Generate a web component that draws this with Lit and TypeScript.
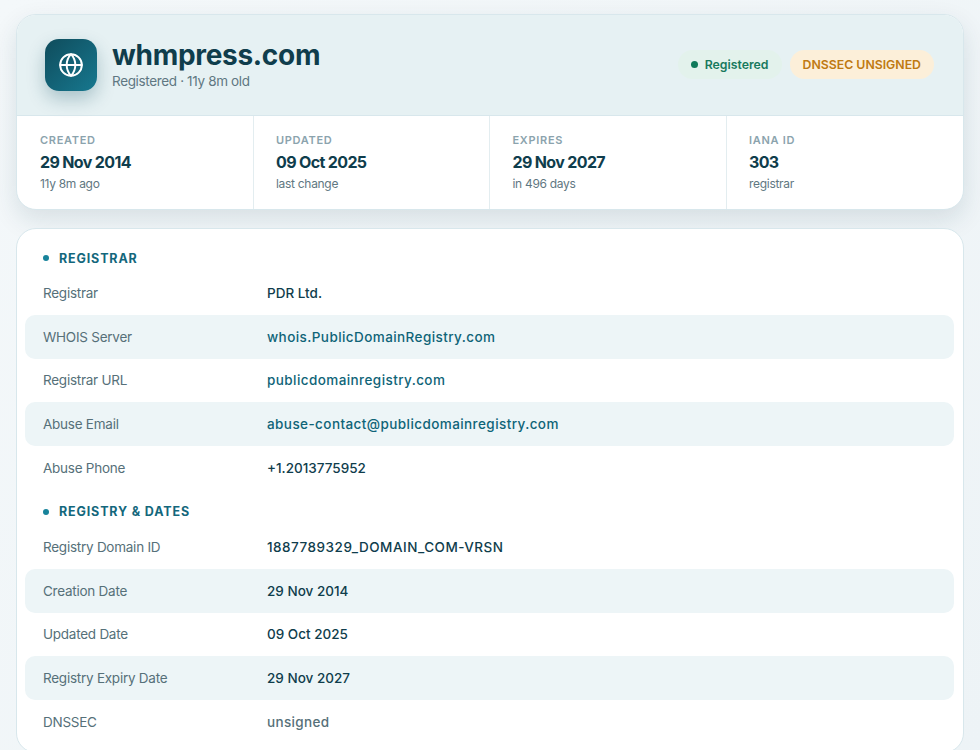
import { css, html, LitElement } from "lit";
import { customElement } from "lit/decorators.js";

type Row = { label: string; value: string; kind?: "link" | "muted" | "id" };

const stats = [
  { label: "CREATED", value: "29 Nov 2014", note: "11y 8m ago" },
  { label: "UPDATED", value: "09 Oct 2025", note: "last change" },
  { label: "EXPIRES", value: "29 Nov 2027", note: "in 496 days" },
  { label: "IANA ID", value: "303", note: "registrar" },
];

const sections: { title: string; rows: Row[] }[] = [
  {
    title: "REGISTRAR",
    rows: [
      { label: "Registrar", value: "PDR Ltd." },
      { label: "WHOIS Server", value: "whois.PublicDomainRegistry.com", kind: "link" },
      { label: "Registrar URL", value: "publicdomainregistry.com", kind: "link" },
      { label: "Abuse Email", value: "abuse-contact@publicdomainregistry.com", kind: "link" },
      { label: "Abuse Phone", value: "+1.2013775952" },
    ],
  },
  {
    title: "REGISTRY & DATES",
    rows: [
      { label: "Registry Domain ID", value: "1887789329_DOMAIN_COM-VRSN", kind: "id" },
      { label: "Creation Date", value: "29 Nov 2014" },
      { label: "Updated Date", value: "09 Oct 2025" },
      { label: "Registry Expiry Date", value: "29 Nov 2027" },
      { label: "DNSSEC", value: "unsigned", kind: "muted" },
    ],
  },
];

@customElement("app-root")
export class AppRoot extends LitElement {
  static styles = css`
    :host {
      display: block;
      height: 750px;
      overflow: hidden;
      box-sizing: border-box;
      padding: 14px 16px 0;
      background: linear-gradient(135deg, #f4f8fa, #edf3f6);
      font-family: "Inter", "Liberation Sans", sans-serif;
      color: #0f3d4c;
    }

    .card {
      background: #fff;
      border: 1px solid #d8e7ec;
      border-radius: 20px;
      overflow: hidden;
    }

    .summary {
      box-shadow: 0 10px 26px rgba(15, 61, 76, 0.12);
    }

    .head {
      height: 101px;
      box-sizing: border-box;
      padding: 0 29px 0 28px;
      display: flex;
      align-items: center;
      gap: 15px;
      background: #e6f1f3;
      border-bottom: 1px solid #d8e7ec;
    }

    .logo {
      width: 52px;
      height: 52px;
      border-radius: 14px;
      display: flex;
      align-items: center;
      justify-content: center;
      background: linear-gradient(135deg, #0f4c5c, #17788f);
      box-shadow: 0 8px 18px rgba(15, 76, 92, 0.28);
    }

    .name {
      flex: 1;
      margin-bottom: 2px;
    }

    .domain {
      font-size: 28px;
      line-height: 32px;
      font-weight: 700;
      letter-spacing: -0.3px;
    }

    .age {
      margin-top: 1px;
      font-size: 13.5px;
      line-height: 18px;
      color: #5f7782;
      letter-spacing: -0.35px;
    }

    .pills {
      display: flex;
      gap: 8px;
      margin-bottom: 2px;
    }

    .pill {
      height: 29px;
      box-sizing: border-box;
      padding: 0 13px;
      border-radius: 15px;
      display: flex;
      align-items: center;
      gap: 7px;
      font-size: 12.3px;
      font-weight: 600;
    }

    .pill.ok {
      background: #e3f2ec;
      color: #17795d;
    }

    .pill.ok i {
      width: 7px;
      height: 7px;
      border-radius: 50%;
      background: #0f7a5a;
    }

    .pill.warn {
      background: #fcefd9;
      color: #bf7a12;
    }

    .stats {
      display: grid;
      grid-template-columns: repeat(4, 1fr);
      height: 93px;
    }

    .stat {
      padding: 17px 23px 0 22.5px;
      border-right: 1px solid #e3edf0;
    }

    .stat:first-child {
      padding-left: 23px;
    }

    .stat:last-child {
      border-right: 0;
    }

    .stat-label {
      font-size: 11px;
      line-height: 14px;
      font-weight: 600;
      letter-spacing: 0.7px;
      color: #8ba3ad;
    }

    .stat-value {
      margin-top: 3px;
      font-size: 16px;
      line-height: 24px;
      font-weight: 700;
      letter-spacing: -0.65px;
    }

    .stat-note {
      margin-top: 2px;
      font-size: 12px;
      line-height: 16px;
      color: #5f7782;
      letter-spacing: -0.3px;
    }

    .details {
      margin-top: 18px;
      padding: 7px 9px 8px 8px;
    }

    .section-title {
      display: flex;
      align-items: center;
      gap: 10px;
      height: 18px;
      padding: 13px 18px 4px;
      font-size: 12.5px;
      font-weight: 700;
      letter-spacing: 0.85px;
      color: #13677c;
    }

    .section-title i {
      width: 6px;
      height: 6px;
      border-radius: 50%;
      background: #17839b;
    }

    .row {
      display: grid;
      grid-template-columns: 224px 1fr;
      align-items: center;
      height: 43.8px;
      padding: 0 18px;
      border-radius: 10px;
      font-size: 13.5px;
    }

    .row.stripe {
      background: #edf5f7;
    }

    .row-label {
      color: #567079;
      letter-spacing: -0.25px;
    }

    .row-value {
      font-weight: 500;
      color: #0f3d4c;
    }

    .row-value.link {
      color: #0f6478;
      letter-spacing: 0.42px;
    }

    .row-value.muted {
      color: #567079;
      letter-spacing: 0.35px;
    }

    .row-value.id {
      letter-spacing: 0.5px;
    }
  `;

  render() {
    return html`
      <div class="card summary">
        <div class="head">
          <div class="logo">
            <svg width="26" height="26" viewBox="0 0 24 24" fill="none" stroke="#fff" stroke-width="1.8" stroke-linecap="round" stroke-linejoin="round">
              <circle cx="12" cy="12" r="10"></circle>
              <path d="M2 12h20"></path>
              <path d="M12 2a15 15 0 0 1 4 10 15 15 0 0 1-4 10 15 15 0 0 1-4-10 15 15 0 0 1 4-10z"></path>
            </svg>
          </div>
          <div class="name">
            <div class="domain">whmpress.com</div>
            <div class="age">Registered · 11y 8m old</div>
          </div>
          <div class="pills">
            <div class="pill ok"><i></i>Registered</div>
            <div class="pill warn">DNSSEC UNSIGNED</div>
          </div>
        </div>
        <div class="stats">
          ${stats.map(
            (s) => html`
              <div class="stat">
                <div class="stat-label">${s.label}</div>
                <div class="stat-value">${s.value}</div>
                <div class="stat-note">${s.note}</div>
              </div>
            `
          )}
        </div>
      </div>
      <div class="card details">
        ${sections.map(
          (sec) => html`
            <section>
              <div class="section-title"><i></i>${sec.title}</div>
              ${sec.rows.map(
                (r, i) => html`
                  <div class="row ${i % 2 ? "stripe" : ""}">
                    <span class="row-label">${r.label}</span>
                    <span class="row-value ${r.kind ?? ""}">${r.value}</span>
                  </div>
                `
              )}
            </section>
          `
        )}
      </div>
    `;
  }
}
